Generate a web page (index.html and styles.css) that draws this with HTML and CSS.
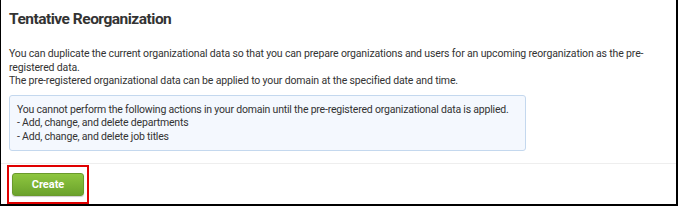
FILE: index.html
```html
<!DOCTYPE html>
<html lang="en">

<head>
    <meta charset="UTF-8">
    <title>Tentative Reorganization</title>
    <link rel="stylesheet" href="styles.css">
</head>

<body>
    <div class="panel">
        <h2 class="panel-title">Tentative Reorganization</h2>

        <div class="panel-body">
            <p class="intro">
                You can duplicate the current organizational data so that you can prepare organizations and users for an upcoming reorganization as the pre-registered data.<br>
                The pre-registered organizational data can be applied to your domain at the specified date and time.
            </p>
            <div class="notice">
                You cannot perform the following actions in your domain until the pre-registered organizational data is applied.<br>
                - Add, change, and delete departments<br>
                - Add, change, and delete job titles
            </div>
        </div>

        <div class="panel-footer">
            <span class="highlight">
                <button class="btn-create">Create</button>
            </span>
        </div>
    </div>
</body>

</html>
```

FILE: styles.css
```css
* {
    margin: 0;
    padding: 0;
    box-sizing: border-box;
}

body {
    background-color: #fff;
    font-family: Roboto, "Liberation Sans", sans-serif;
    color: #333;
}

.panel {
    width: 678px;
    height: 206px;
    overflow: hidden;
    border-left: 1px solid #000;
    border-right: 2px solid #000;
    border-bottom: 2px solid #000;
    display: flex;
    flex-direction: column;
}

.panel-title {
    font-size: 15.5px;
    font-weight: bold;
    line-height: 20px;
    letter-spacing: -0.5px;
    padding: 9px 8px 0;
    color: #333;
}

.panel-body {
    padding: 18px 8px 0;
}

.intro {
    width: 664px;
    font-size: 10.5px;
    line-height: 13.5px;
    letter-spacing: -0.15px;
    color: #333;
}

.notice {
    margin-top: 7px;
    width: 517px;
    padding: 7px 4px 7px 7px;
    background-color: #f4f8fe;
    border: 1px solid #c4d8ee;
    border-radius: 3px;
    font-size: 10.5px;
    line-height: 13.5px;
    letter-spacing: -0.2px;
    color: #333;
}

.panel-footer {
    margin-top: 12px;
    border-top: 1px solid #eee;
    padding: 1px 6px 0;
}

.highlight {
    display: inline-block;
    border: 2px solid #e00000;
    padding: 6px 3px 6px 3px;
}

.btn-create {
    display: block;
    width: 72px;
    height: 23px;
    border: 1px solid #6a9a2c;
    border-radius: 3px;
    background: linear-gradient(#8ec63f, #6ba22c);
    color: #fff;
    font-family: Roboto, "Liberation Sans", sans-serif;
    font-size: 11px;
    font-weight: bold;
    box-shadow: 0 1px 1px rgba(0, 0, 0, 0.2);
}
```
